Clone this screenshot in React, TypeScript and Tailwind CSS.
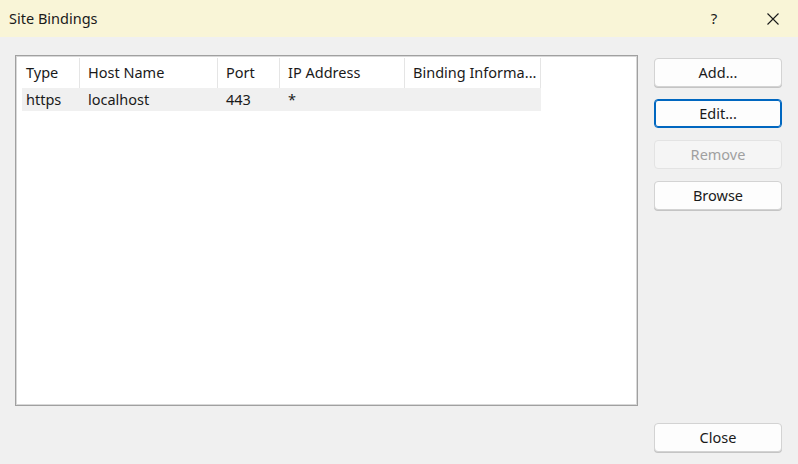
import React from 'react';

const columns = [
  { label: 'Type', width: 58 },
  { label: 'Host Name', width: 138 },
  { label: 'Port', width: 62 },
  { label: 'IP Address', width: 125 },
  { label: 'Binding Informa...', width: 136 },
];

const row = ['https', 'localhost', '443', '*', ''];

function DialogButton({
  label,
  focused,
  disabled,
}: {
  label: string;
  focused?: boolean;
  disabled?: boolean;
}) {
  return (
    <button
      disabled={disabled}
      className={`w-[128px] h-[29px] rounded-[4px] border text-[14.5px] leading-none ${
        focused
          ? 'border-[#0067c0] bg-[#fdfdfd] text-[#1a1a1a] shadow-[inset_0_0_0_1px_#0067c0]'
          : disabled
          ? 'border-[#e3e3e3] bg-[#f5f5f5] text-[#a0a0a0]'
          : 'border-[#d3d3d3] bg-[#fdfdfd] text-[#1a1a1a] shadow-[0_1px_0_#c4c4c4]'
      }`}
    >
      {label}
    </button>
  );
}

export default function App() {
  return (
    <div
      className="w-[798px] h-[464px] bg-[#f0f0f0] flex flex-col overflow-hidden text-[#1a1a1a]"
      style={{ fontFamily: '"Noto Sans", "Open Sans", sans-serif' }}
    >
      {/* title bar */}
      <div className="h-[37px] bg-[#f9f5d7] flex items-center pl-[9px] shrink-0">
        <span className="text-[14.5px] flex-1">Site Bindings</span>
        <span className="w-[46px] text-center text-[15px] mr-[13px]">?</span>
        <div className="w-[46px] h-[37px] flex items-center justify-center mr-[2px]">
          <svg width="12" height="12" viewBox="0 0 12 12">
            <path d="M0.5 0.5 L11.5 11.5 M11.5 0.5 L0.5 11.5" stroke="#1a1a1a" strokeWidth="1.1" />
          </svg>
        </div>
      </div>

      <div className="flex flex-1 pt-[18px] pl-[15px] pb-[12px]">
        {/* list view */}
        <div className="w-[623px] h-[351px] border border-[#a0a0a0] bg-white">
          <div className="w-full h-full border border-[#d8d8d8] pl-[5px] pt-[1px]">
            <div className="flex h-[30px]">
              {columns.map((c, i) => (
                <div
                  key={c.label}
                  className={`h-full flex items-center border-r border-[#e5e5e5] text-[14.5px] whitespace-nowrap overflow-hidden ${
                    i === 0 ? 'pl-[4px]' : 'pl-[8px]'
                  }`}
                  style={{ width: c.width }}
                >
                  {c.label}
                </div>
              ))}
            </div>
            <div className="flex h-[23px] bg-[#f0f0f0] w-max">
              {row.map((v, i) => (
                <div
                  key={i}
                  className={`h-full flex items-center text-[14.5px] whitespace-nowrap ${
                    i === 0 ? 'pl-[4px]' : 'pl-[8px]'
                  }`}
                  style={{ width: columns[i].width }}
                >
                  {v}
                </div>
              ))}
            </div>
          </div>
        </div>

        {/* buttons */}
        <div className="ml-[16px] flex flex-col pt-[3px]">
          <div className="flex flex-col gap-[12px]">
            <DialogButton label="Add..." />
            <DialogButton label="Edit..." focused />
            <DialogButton label="Remove" disabled />
            <DialogButton label="Browse" />
          </div>
          <div className="mt-auto">
            <DialogButton label="Close" />
          </div>
        </div>
      </div>
    </div>
  );
}
